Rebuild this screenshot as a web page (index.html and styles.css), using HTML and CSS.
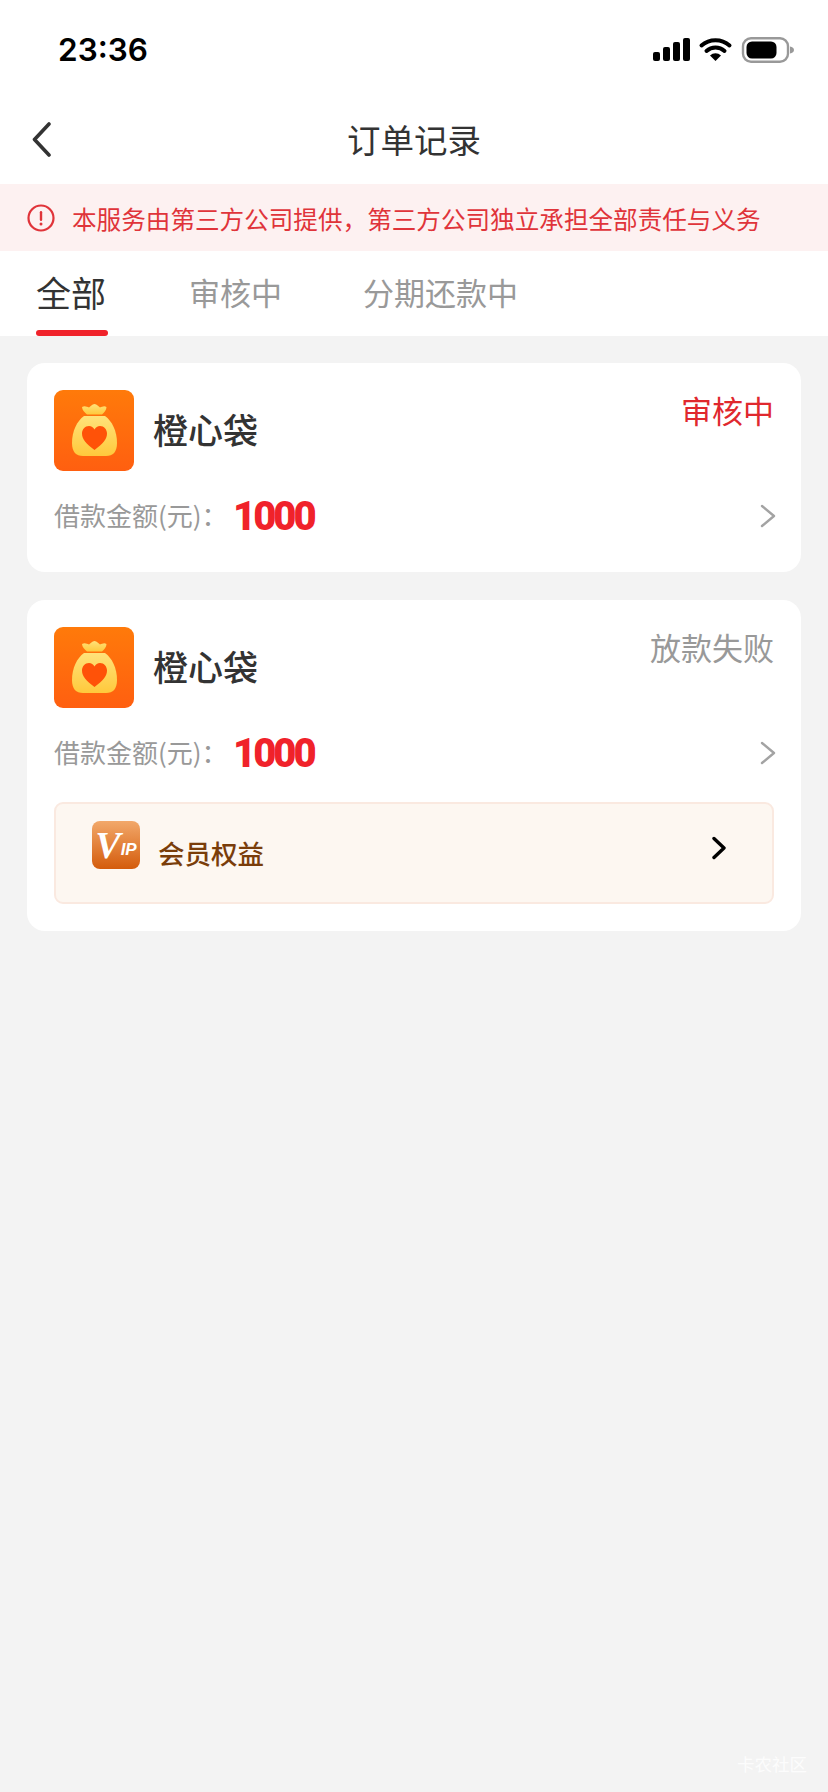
FILE: index.html
```html
<!DOCTYPE html>
<html lang="zh-CN">
<head>
    <meta charset="UTF-8">
    <meta name="viewport" content="width=device-width, initial-scale=1.0">
    <link rel="stylesheet" href="styles.css">
    <title>订单记录</title>
</head>
<body>
    <div class="pagina">
        <div class="barra-estado">
            <span class="hora">23:36</span>
            <svg class="iconos-estado" width="141" height="26" viewBox="0 0 141 26">
                <rect x="0" y="15" width="7" height="9" rx="2"/>
                <rect x="10" y="10" width="7" height="14" rx="2"/>
                <rect x="20" y="5" width="7" height="19" rx="2"/>
                <rect x="30" y="1" width="7" height="23" rx="2"/>
                <path d="M48.5 8.5a21 21 0 0 1 28 0" fill="none" stroke="#000" stroke-width="4" stroke-linecap="round"/>
                <path d="M53.5 14a13.5 13.5 0 0 1 18 0" fill="none" stroke="#000" stroke-width="4" stroke-linecap="round"/>
                <path d="M62.5 24l-5.5-5.500a8 8 0 0 1 11 0z"/>
                <rect x="90" y="1.200" width="45" height="23.600" rx="8" fill="none" stroke="#999" stroke-width="2.400"/>
                <rect x="93.500" y="4.500" width="30" height="17" rx="5.500"/>
                <path d="M137 9.500c2.500 .6 4 1.800 4 3.500s-1.500 2.900-4 3.500z" fill="#999"/>
            </svg>
        </div>

        <div class="cabecera">
            <svg class="atras" width="19" height="35" viewBox="0 0 19 35">
                <path d="M17 2L2.500 17.500L17 33" fill="none" stroke="#333" stroke-width="3.600" stroke-linecap="round" stroke-linejoin="round"/>
            </svg>
            <h1>订单记录</h1>
        </div>

        <div class="aviso">
            <svg width="28" height="28" viewBox="0 0 28 28">
                <circle cx="14" cy="14" r="12.500" fill="none" stroke="#e0343a" stroke-width="2.200"/>
                <rect x="12.800" y="7" width="2.400" height="10" rx="1.200" fill="#e0343a"/>
                <circle cx="14" cy="20" r="1.500" fill="#e0343a"/>
            </svg>
            <p>本服务由第三方公司提供，第三方公司独立承担全部责任与义务</p>
        </div>

        <div class="pestanas">
            <div class="pestana activa">全部<span class="subrayado"></span></div>
            <div class="pestana">审核中</div>
            <div class="pestana">分期还款中</div>
        </div>

        <div class="lista">
            <div class="tarjeta">
                <div class="fila-producto">
                    <svg class="logo" width="80" height="81" viewBox="0 0 80 81">
                        <defs>
                            <linearGradient id="fondoA" x1="0" y1="0" x2="0" y2="1">
                                <stop offset="0" stop-color="#ff7a0a"/>
                                <stop offset="1" stop-color="#ff5f10"/>
                            </linearGradient>
                            <linearGradient id="bolsaA" x1="0" y1="0" x2="0" y2="1">
                                <stop offset="0" stop-color="#ffe27a"/>
                                <stop offset="1" stop-color="#ffc93c"/>
                            </linearGradient>
                        </defs>
                        <rect width="80" height="81" rx="9" fill="url(#fondoA)"/>
                        <path d="M28 17c3-1.500 5 0 7 .5c1.500-1 3-3.500 5.500-3.500s4 2.500 5.500 3.500c2-.5 4-2 6.500-.5c0 3-2.500 5.500-4.500 7.500h-15c-2-2-5-4.500-5-7.500z" fill="url(#bolsaA)"/>
                        <path d="M30 26h21c7 5 12 15 12 27c0 9-4 13-11 13h-23c-7 0-11-4-11-13c0-12 5-22 12-27z" fill="url(#bolsaA)"/>
                        <path d="M40.500 60c-8-6-12.500-10.500-12.500-16.500c0-4 3-7.500 7-7.500c2.500 0 4.200 1.200 5.500 3.500c1.300-2.300 3-3.500 5.500-3.500c4 0 7 3.500 7 7.500c0 6-4.500 10.500-12.500 16.500z" fill="#ff5208"/>
                    </svg>
                    <span class="nombre">橙心袋</span>
                    <span class="estado revision">审核中</span>
                </div>
                <div class="fila-importe">
                    <span class="etiqueta">借款金额(元)：</span>
                    <span class="importe">1000</span>
                    <svg class="flecha" width="16" height="24" viewBox="0 0 16 24">
                        <path d="M2 2L14 12L2 22" fill="none" stroke="#a3a3a3" stroke-width="2.400" stroke-linecap="round" stroke-linejoin="round"/>
                    </svg>
                </div>
            </div>

            <div class="tarjeta">
                <div class="fila-producto">
                    <svg class="logo" width="80" height="81" viewBox="0 0 80 81">
                        <rect width="80" height="81" rx="9" fill="url(#fondoA)"/>
                        <path d="M28 17c3-1.500 5 0 7 .5c1.500-1 3-3.500 5.500-3.500s4 2.500 5.500 3.500c2-.5 4-2 6.500-.5c0 3-2.500 5.500-4.500 7.500h-15c-2-2-5-4.500-5-7.500z" fill="url(#bolsaA)"/>
                        <path d="M30 26h21c7 5 12 15 12 27c0 9-4 13-11 13h-23c-7 0-11-4-11-13c0-12 5-22 12-27z" fill="url(#bolsaA)"/>
                        <path d="M40.500 60c-8-6-12.500-10.500-12.500-16.500c0-4 3-7.500 7-7.500c2.500 0 4.200 1.200 5.500 3.500c1.300-2.300 3-3.500 5.500-3.500c4 0 7 3.500 7 7.500c0 6-4.500 10.500-12.500 16.500z" fill="#ff5208"/>
                    </svg>
                    <span class="nombre">橙心袋</span>
                    <span class="estado fallido">放款失败</span>
                </div>
                <div class="fila-importe">
                    <span class="etiqueta">借款金额(元)：</span>
                    <span class="importe">1000</span>
                    <svg class="flecha" width="16" height="24" viewBox="0 0 16 24">
                        <path d="M2 2L14 12L2 22" fill="none" stroke="#a3a3a3" stroke-width="2.400" stroke-linecap="round" stroke-linejoin="round"/>
                    </svg>
                </div>
                <div class="socio">
                    <div class="vip"><span class="vip-v">V</span><span class="vip-ip">IP</span></div>
                    <span class="socio-texto">会员权益</span>
                    <svg class="flecha-socio" width="14" height="24" viewBox="0 0 14 24">
                        <path d="M2 2.500L12 12L2 21.500" fill="none" stroke="#000" stroke-width="3.400" stroke-linecap="round" stroke-linejoin="round"/>
                    </svg>
                </div>
            </div>
        </div>

        <span class="marca">卡农社区</span>
    </div>
</body>
</html>
```

FILE: styles.css
```css
* {
    margin: 0;
    padding: 0;
    box-sizing: border-box;
    font-family: "Noto Sans CJK SC", "Noto Sans", sans-serif;
}
body {
    background-color: #f3f3f3;
}
.pagina {
    position: relative;
    width: 828px;
    height: 1792px;
    overflow: hidden;
}

/* barra de arriba */
.barra-estado {
    height: 92px;
    background-color: #fff;
    display: flex;
    justify-content: space-between;
    align-items: flex-start;
    padding: 30px 34px 0 58px;
}
.hora {
    font-family: Inter, "Liberation Sans", sans-serif;
    font-size: 31.500px;
    font-weight: 600;
    line-height: 40px;
    color: #000;
}
.iconos-estado {
    margin-top: 7px;
}

.cabecera {
    position: relative;
    height: 92px;
    background-color: #fff;
    display: flex;
    align-items: center;
    justify-content: center;
}
.cabecera h1 {
    font-size: 33.500px;
    font-weight: 400;
    color: #333;
}
.atras {
    position: absolute;
    left: 32px;
    top: 30px;
}

.aviso {
    height: 67px;
    background-color: #fdf1f1;
    display: flex;
    align-items: center;
    gap: 17px;
    padding-left: 27px;
}
.aviso p {
    font-size: 24.600px;
    color: #e0343a;
    white-space: nowrap;
}

/* pestanas */
.pestanas {
    height: 85px;
    background-color: #fff;
    display: flex;
    gap: 81px;
    padding: 17px 0 0 36px;
}
.pestana {
    font-size: 31px;
    line-height: 48px;
    color: #999;
}
.activa {
    font-size: 35px;
    color: #333;
    width: 72px;
}
.subrayado {
    display: block;
    height: 6px;
    margin-top: 14px;
    border-radius: 3px;
    background-color: #f0222a;
}

/* tarjetas */
.lista {
    display: flex;
    flex-direction: column;
    gap: 28px;
    padding: 27px;
}
.tarjeta {
    background-color: #fff;
    border-radius: 18px;
    padding: 27px;
}
.fila-producto {
    position: relative;
    display: flex;
    align-items: center;
    gap: 19px;
}
.nombre {
    margin-top: -5px;
    font-size: 35px;
    font-weight: 500;
    color: #333;
}
.estado {
    position: absolute;
    right: 0;
    top: -2px;
    font-size: 31px;
    line-height: 44px;
}
.revision {
    color: #e0282e;
}
.fallido {
    color: #999;
}
.fila-importe {
    display: flex;
    align-items: center;
    height: 50px;
    margin-top: 20px;
    margin-bottom: 4px;
}
.etiqueta {
    width: 180px;
    margin-top: -4px;
    font-size: 26px;
    color: #999;
}
.importe {
    margin-left: -1px;
    font-family: Roboto, "Liberation Sans", sans-serif;
    font-size: 40px;
    font-weight: 900;
    letter-spacing: -3px;
    color: #f0222a;
}
.flecha {
    margin-left: auto;
    margin-right: -2px;
}

/* caja de socio */
.socio {
    display: flex;
    align-items: center;
    height: 102px;
    margin-top: 24px;
    padding-left: 36px;
    background-color: #fdf7f1;
    border: 2px solid #fae9e0;
    border-radius: 9px;
}
.vip {
    width: 48px;
    height: 48px;
    margin-top: -16px;
    border-radius: 8px;
    background: linear-gradient(#f2a86a, #d45c0c);
    display: flex;
    align-items: center;
    justify-content: center;
    color: #fff;
    font-style: italic;
    font-weight: 700;
}
.vip-v {
    font-family: "Liberation Serif", serif;
    font-size: 38px;
    line-height: 48px;
}
.vip-ip {
    margin-top: 10px;
    font-family: "Liberation Sans", sans-serif;
    font-size: 17px;
}
.socio-texto {
    margin-left: 18px;
    margin-top: -2px;
    font-size: 26.500px;
    font-weight: 500;
    color: #7a3d0a;
}
.flecha-socio {
    margin-left: auto;
    margin-right: 46px;
    margin-top: -10px;
}

.marca {
    position: absolute;
    right: 21px;
    bottom: 16px;
    font-size: 17.500px;
    color: rgba(255, 255, 255, 0.8);
}
```
